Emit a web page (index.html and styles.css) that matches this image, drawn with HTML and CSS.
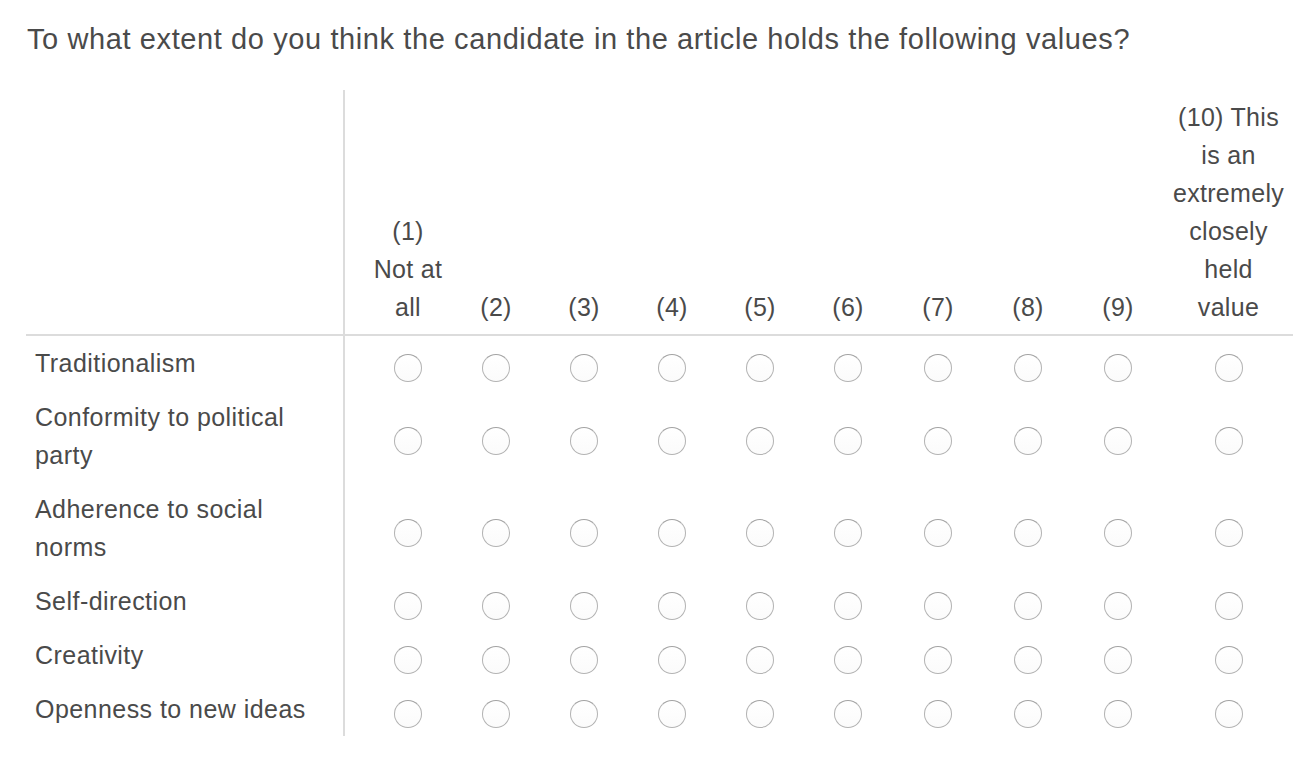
FILE: index.html
```html
<!DOCTYPE html>
<html lang="en">
<head>
<meta charset="utf-8">
<title>Matrix question</title>
<link rel="stylesheet" href="styles.css">
</head>
<body>
<div class="page">
  <h1 class="question">To what extent do you think the candidate in the article holds the following values?</h1>
  <div class="matrix">
    <div class="row head">
      <div class="label"></div>
      <div class="choices">
        <div class="col-head">(1) Not at all</div>
        <div class="col-head">(2)</div>
        <div class="col-head">(3)</div>
        <div class="col-head">(4)</div>
        <div class="col-head">(5)</div>
        <div class="col-head">(6)</div>
        <div class="col-head">(7)</div>
        <div class="col-head">(8)</div>
        <div class="col-head">(9)</div>
        <div class="col-head">(10) This is an extremely closely held value</div>
      </div>
    </div>
    <div class="row">
      <div class="label">Traditionalism</div>
      <div class="choices">
        <span class="cell"><span class="radio"></span></span><span class="cell"><span class="radio"></span></span><span class="cell"><span class="radio"></span></span><span class="cell"><span class="radio"></span></span><span class="cell"><span class="radio"></span></span><span class="cell"><span class="radio"></span></span><span class="cell"><span class="radio"></span></span><span class="cell"><span class="radio"></span></span><span class="cell"><span class="radio"></span></span><span class="cell"><span class="radio"></span></span>
      </div>
    </div>
    <div class="row">
      <div class="label">Conformity to political party</div>
      <div class="choices">
        <span class="cell"><span class="radio"></span></span><span class="cell"><span class="radio"></span></span><span class="cell"><span class="radio"></span></span><span class="cell"><span class="radio"></span></span><span class="cell"><span class="radio"></span></span><span class="cell"><span class="radio"></span></span><span class="cell"><span class="radio"></span></span><span class="cell"><span class="radio"></span></span><span class="cell"><span class="radio"></span></span><span class="cell"><span class="radio"></span></span>
      </div>
    </div>
    <div class="row">
      <div class="label">Adherence to social norms</div>
      <div class="choices">
        <span class="cell"><span class="radio"></span></span><span class="cell"><span class="radio"></span></span><span class="cell"><span class="radio"></span></span><span class="cell"><span class="radio"></span></span><span class="cell"><span class="radio"></span></span><span class="cell"><span class="radio"></span></span><span class="cell"><span class="radio"></span></span><span class="cell"><span class="radio"></span></span><span class="cell"><span class="radio"></span></span><span class="cell"><span class="radio"></span></span>
      </div>
    </div>
    <div class="row">
      <div class="label">Self-direction</div>
      <div class="choices">
        <span class="cell"><span class="radio"></span></span><span class="cell"><span class="radio"></span></span><span class="cell"><span class="radio"></span></span><span class="cell"><span class="radio"></span></span><span class="cell"><span class="radio"></span></span><span class="cell"><span class="radio"></span></span><span class="cell"><span class="radio"></span></span><span class="cell"><span class="radio"></span></span><span class="cell"><span class="radio"></span></span><span class="cell"><span class="radio"></span></span>
      </div>
    </div>
    <div class="row">
      <div class="label">Creativity</div>
      <div class="choices">
        <span class="cell"><span class="radio"></span></span><span class="cell"><span class="radio"></span></span><span class="cell"><span class="radio"></span></span><span class="cell"><span class="radio"></span></span><span class="cell"><span class="radio"></span></span><span class="cell"><span class="radio"></span></span><span class="cell"><span class="radio"></span></span><span class="cell"><span class="radio"></span></span><span class="cell"><span class="radio"></span></span><span class="cell"><span class="radio"></span></span>
      </div>
    </div>
    <div class="row">
      <div class="label">Openness to new ideas</div>
      <div class="choices">
        <span class="cell"><span class="radio"></span></span><span class="cell"><span class="radio"></span></span><span class="cell"><span class="radio"></span></span><span class="cell"><span class="radio"></span></span><span class="cell"><span class="radio"></span></span><span class="cell"><span class="radio"></span></span><span class="cell"><span class="radio"></span></span><span class="cell"><span class="radio"></span></span><span class="cell"><span class="radio"></span></span><span class="cell"><span class="radio"></span></span>
      </div>
    </div>
  </div>
</div>
</body>
</html>
```
FILE: styles.css
```css
html, body {
  margin: 0;
  padding: 0;
  background: #fff;
}
body {
  font-family: "Liberation Sans", Arial, sans-serif;
  color: #4a4a4a;
}
.page {
  padding: 0 0 0 26px;
  width: 1267px;
}
.question {
  margin: 0;
  padding: 19px 0 0 1px;
  height: 90px;
  box-sizing: border-box;
  font-size: 29px;
  letter-spacing: 0.6px;
  line-height: 40px;
  font-weight: normal;
  color: #4a4a4a;
}
.matrix {
  display: flex;
  flex-direction: column;
}
.row {
  display: flex;
  align-items: stretch;
}
.row.head {
  border-bottom: 2px solid #dcdcdc;
}
.label {
  width: 319px;
  flex: none;
  box-sizing: border-box;
  padding: 8px 20px 8px 9px;
  border-right: 2px solid #dcdcdc;
  font-size: 25px;
  letter-spacing: 0.45px;
  line-height: 38px;
}
.choices {
  flex: 1;
  display: grid;
  grid-template-columns: repeat(6, 88px) 92px 88px 92px 1fr;
  padding-left: 19px;
}
.col-head {
  align-self: end;
  text-align: center;
  padding: 8px 8px;
  font-size: 25px;
  letter-spacing: 0.3px;
  line-height: 38px;
}
.cell {
  display: flex;
  align-items: center;
  justify-content: center;
  padding-top: 10px;
}
.radio {
  width: 28px;
  height: 28px;
  box-sizing: border-box;
  border-radius: 50%;
  border: 1.5px solid #b3b3b3;
  border-top-color: #a3a3a3;
  background: linear-gradient(#ffffff, #fbfbfb);
}
```
